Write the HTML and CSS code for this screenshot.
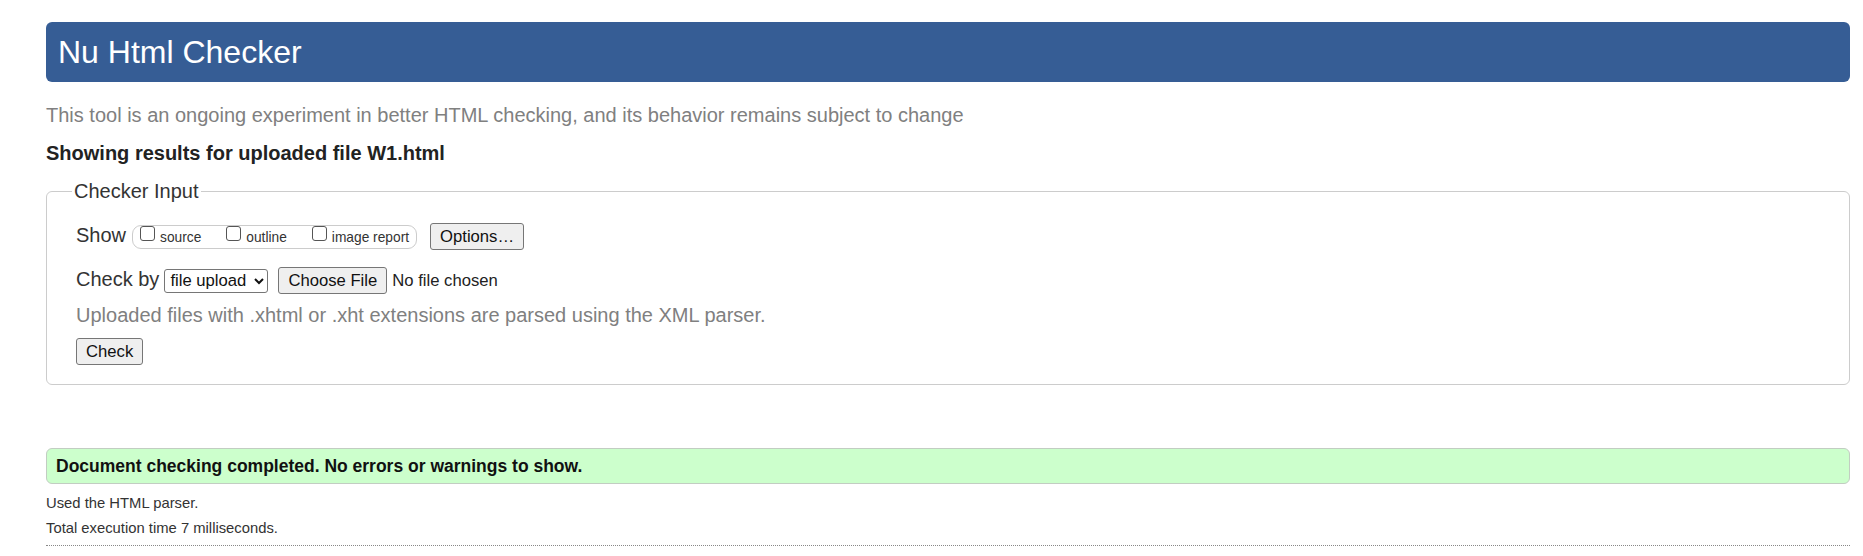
FILE: index.html
```html
<!DOCTYPE html>
<html lang="en">
<head>
<meta charset="utf-8">
<title>Nu Html Checker</title>
<link rel="stylesheet" href="styles.css">
</head>
<body>
<div class="page">
  <h1 class="title">Nu Html Checker</h1>
  <p class="lead">This tool is an ongoing experiment in better HTML checking, and its behavior remains subject to change</p>
  <p class="showing">Showing results for uploaded file W1.html</p>
  <form class="form" action="#">
    <fieldset class="input">
      <legend class="legend">Checker Input</legend>
      <div class="row row-show">
        <span class="label">Show</span>
        <span class="opts">
          <label class="opt"><input type="checkbox" class="box">source</label>
          <label class="opt"><input type="checkbox" class="box">outline</label>
          <label class="opt"><input type="checkbox" class="box">image report</label>
        </span>
        <button type="button" class="btn btn-options">Options…</button>
      </div>
      <div class="row row-by">
        <span class="label">Check by</span>
        <select class="sel">
          <option>file upload</option>
        </select>
        <button type="button" class="btn btn-file">Choose File</button>
        <span class="nofile">No file chosen</span>
      </div>
      <p class="hint">Uploaded files with .xhtml or .xht extensions are parsed using the XML parser.</p>
      <div class="row row-submit">
        <button type="button" class="btn">Check</button>
      </div>
    </fieldset>
  </form>
  <div class="success">Document checking completed. No errors or warnings to show.</div>
  <p class="meta">Used the HTML parser.</p>
  <p class="meta">Total execution time 7 milliseconds.</p>
  <div class="dots"></div>
</div>
</body>
</html>
```

FILE: styles.css
```css
html, body {
  margin: 0;
  padding: 0;
  background: #ffffff;
}

body {
  font-family: "Liberation Sans", Arial, sans-serif;
  color: #222222;
}

.page {
  padding: 22px 13px 0 46px;
}

.title {
  margin: 0;
  padding: 12px 12px;
  font-size: 32px;
  line-height: 36px;
  font-weight: normal;
  color: #ffffff;
  background: #365d95;
  border-radius: 6px;
}

.lead {
  margin: 22px 0 0 0;
  font-size: 20px;
  line-height: 23px;
  color: #808080;
}

.showing {
  margin: 15px 0 0 0;
  font-size: 20px;
  line-height: 23px;
  font-weight: bold;
  color: #222222;
}

.form {
  margin: 15px 0 0 0;
}

.input {
  margin: 0;
  padding: 0 29px 19px 29px;
  border: 1px solid #cccccc;
  border-radius: 6px;
  min-width: 0;
}

.legend {
  margin-left: -4px;
  padding: 0 2px;
  font-size: 20px;
  line-height: 23px;
  color: #333333;
}

.row {
  display: flex;
  align-items: baseline;
}

.row-show {
  margin-top: 20px;
}

.row-by {
  margin-top: 17px;
}

.row-submit {
  margin-top: 11px;
}

.label {
  font-size: 20px;
  line-height: 23px;
  color: #333333;
}

.opts {
  display: inline-flex;
  align-items: baseline;
  margin-left: 6px;
  padding: 1px 7px 2px 7px;
  border: 1px solid #cccccc;
  border-radius: 9px;
}

.opt {
  display: inline-flex;
  align-items: baseline;
  font-size: 13.75px;
  line-height: 16px;
  color: #333333;
  margin-right: 25px;
}

.opt:last-child {
  margin-right: 0;
}

.box {
  appearance: none;
  -webkit-appearance: none;
  display: inline-block;
  width: 15px;
  height: 15px;
  margin: 0 5px 0 0;
  box-sizing: border-box;
  border: 1px solid #555555;
  border-radius: 3px;
  background: #ffffff;
  position: relative;
  top: -1px;
}

.btn {
  font-family: "Liberation Sans", Arial, sans-serif;
  font-size: 16.67px;
  line-height: 19px;
  color: #111111;
  background: #efefef;
  border: 1px solid #767676;
  border-radius: 3px;
  padding: 3px 9px;
  margin: 0;
}

.btn-options {
  margin-left: 13px;
}

.sel {
  font-family: "Liberation Sans", Arial, sans-serif;
  font-size: 16.67px;
  color: #111111;
  margin-left: 5px;
  width: 104px;
  height: 24px;
  border: 1px solid #767676;
  border-radius: 3px;
  background: #ffffff;
  padding: 0 1px;
}

.btn-file {
  margin-left: 10px;
}

.nofile {
  margin-left: 5px;
  font-size: 16.67px;
  color: #222222;
}

.hint {
  margin: 10px 0 0 0;
  font-size: 20px;
  line-height: 23px;
  color: #808080;
}

.success {
  margin-top: 63px;
  padding: 7px 9px 7px 9px;
  font-size: 17.5px;
  line-height: 20px;
  font-weight: bold;
  color: #111111;
  background: #ccffcc;
  border: 1px solid #c2cdc2;
  border-radius: 6px;
}

.meta {
  margin: 0;
  font-size: 14.8px;
  line-height: 25px;
  color: #333333;
}

.success + .meta {
  margin-top: 7px;
}

.dots {
  margin-top: 4px;
  border-top: 1px dotted #888888;
}
```
